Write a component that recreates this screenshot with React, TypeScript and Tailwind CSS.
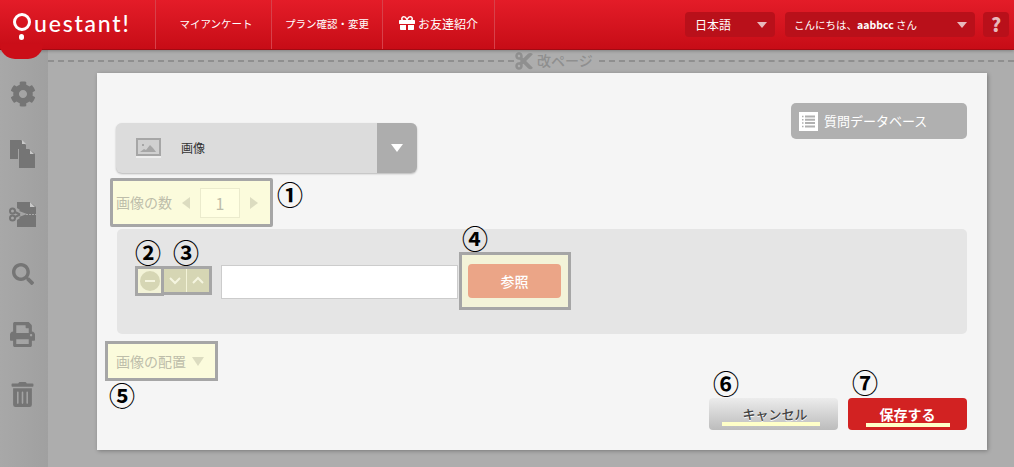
import { FaCog, FaCut, FaGift, FaPrint, FaSearch, FaTrashAlt } from 'react-icons/fa'

const FONT = "font-['Noto_Sans_CJK_JP','Liberation_Sans',sans-serif]"

function CopyIcon() {
  return (
    <svg width="25" height="28" viewBox="0 0 25 28" fill="currentColor">
      <path d="M0 0h11l5 5v4H8v10H0z" />
      <path d="M9 9h10l6 5v14H9z" />
      <path d="M12 0l4 4h-4zM20 10l4 4h-4z" fill="#c8c8c8" />
    </svg>
  )
}

function CutPageIcon() {
  return (
    <svg width="27" height="25" viewBox="0 0 27 25" fill="currentColor">
      <path d="M8 0h13l6 5v20H8v-7l3-2-1-1 8-3-8-3 1-1-3-2z" />
      <path d="M21 0l5 5h-5z" fill="#c8c8c8" />
      <circle cx="3.5" cy="9" r="2.5" fill="none" stroke="currentColor" strokeWidth="2" />
      <circle cx="3.5" cy="16" r="2.5" fill="none" stroke="currentColor" strokeWidth="2" />
      <path d="M6 10l5 2.5M6 15l5-2.5" stroke="currentColor" strokeWidth="2" />
      <path d="M17 12.5h10" stroke="#a8a8a8" strokeWidth="1" strokeDasharray="2 1" />
    </svg>
  )
}

function ListIcon() {
  return (
    <svg width="19" height="19" viewBox="0 0 19 19" className="mr-[6px]">
      <rect width="19" height="19" fill="#fff" />
      <path d="M6 4.5h10M6 7.8h10M6 11.1h10M6 14.4h10" stroke="#b0b0b0" strokeWidth="2" />
      <path d="M3 4.5h1.5M3 7.8h1.5M3 11.1h1.5M3 14.4h1.5" stroke="#b0b0b0" strokeWidth="1.5" />
    </svg>
  )
}

function Caret({ className }: { className: string }) {
  return <span className={`block w-0 h-0 border-x-[5px] border-x-transparent border-t-[6px] ${className}`} />
}

function NavItem({ label, className, icon }: { label: string; className: string; icon?: boolean }) {
  return (
    <div className={`h-[49px] flex items-center justify-center gap-[3px] border-r border-[#d8414a] text-white pb-[2px] ${className}`}>
      {icon && <FaGift className="w-[16px] h-[18px] mb-[1px]" />}
      <span>{label}</span>
    </div>
  )
}

function Num({ n, className }: { n: string; className: string }) {
  return (
    <span className={`absolute w-[26px] h-[26px] flex items-center justify-center text-[26px] leading-none font-bold text-black ${className}`}>
      {n}
    </span>
  )
}

export default function App() {
  const sideIcons = [
    <FaCog key="cog" size={26} />,
    <CopyIcon key="copy" />,
    <CutPageIcon key="cut" />,
    <FaSearch key="search" size={22} />,
    <FaPrint key="print" size={25} />,
    <FaTrashAlt key="trash" size={25} />,
  ]

  return (
    <div className={`${FONT} relative w-[1014px] h-[467px] overflow-hidden flex flex-col bg-[#adadad]`}>
      {/* Header */}
      <header className="h-[50px] shrink-0 flex items-start bg-gradient-to-b from-[#e41c28] to-[#c70c16] border-b border-[#a30a12] shadow-[0_1px_3px_rgba(0,0,0,0.25)] z-10">
        <div className="w-[156px] h-[49px] border-r border-[#d8414a] flex items-start pl-[13px] pt-[12px] text-white">
          <span className="relative shrink-0 w-[18px] h-[18px] mt-[1px] mr-[3px] rounded-full border-[3px] border-white">
            <span className="absolute left-[3px] top-[18px] w-[5px] h-[6px] rounded-full bg-white" />
          </span>
          <span className="font-['Lato',sans-serif] text-[23px] leading-[22px] tracking-[1.8px] font-medium">uestant!</span>
        </div>
        <NavItem label="マイアンケート" className="w-[116px] text-[10.5px] pl-[5px]" />
        <NavItem label="プラン確認・変更" className="w-[111px] text-[10.5px]" />
        <NavItem label="お友達紹介" className="w-[112px] text-[12px]" icon />
        <div className="flex-1 flex items-center justify-end gap-[10px] pt-[12px] pr-[5px] text-white">
          <div className="w-[90px] h-[25px] rounded-[4px] bg-[#b9101a] flex items-center justify-between pl-[10px] pr-[8px] text-[12px]">
            <span>日本語</span>
            <Caret className="border-t-[#e8b9bc]" />
          </div>
          <div className="w-[190px] h-[25px] rounded-[4px] bg-[#b9101a] flex items-center justify-between pl-[9px] pr-[8px] text-[10.5px] mr-[-2px]">
            <span>こんにちは、<b>aabbcc</b> さん</span>
            <Caret className="border-t-[#e8b9bc]" />
          </div>
          <div className="w-[26px] h-[25px] rounded-[4px] bg-[#b9101a] flex items-center justify-center text-[19px] font-black text-[#e8b9bc]">?</div>
        </div>
      </header>
      {/* Logo tab hanging under the header */}
      <div className="absolute left-0 top-[44px] w-[43px] h-[15px] rounded-b-[22px] bg-[#cb0e18] z-20" />

      <div className="flex-1 flex min-h-0">
        {/* Sidebar */}
        <aside className="w-[48px] shrink-0 bg-gradient-to-r from-[#a8a8a8] to-[#a0a0a0] flex flex-col pt-[14px] text-[#757575]">
          {sideIcons.map((icon, i) => (
            <div key={i} className="h-[60px] w-[45px] flex items-center justify-center">
              {icon}
            </div>
          ))}
        </aside>

        {/* Main */}
        <main className="flex-1 min-w-0">
          <div className="h-[23px] flex items-center pb-[2px]">
            <div className="w-[466px] border-t-2 border-dashed border-[#8f8f8f]" />
            <div className="flex items-center gap-[3px] text-[#8f8f8f] text-[14px]">
              <FaCut size={20} />
              <span className="font-medium">改ページ</span>
            </div>
            <div className="flex-1 ml-[6px] border-t-2 border-dashed border-[#8f8f8f]" />
          </div>

          {/* Card */}
          <div className="relative ml-[49px] w-[890px] h-[377px] bg-[#f5f5f5] shadow-[1px_1px_4px_rgba(0,0,0,0.3)] pt-[30px] pl-[19px] pr-[20px]">
            <div className="flex items-start justify-between">
              <div className="mt-[20px] w-[301px] h-[50px] rounded-[6px] bg-[#dcdcdc] shadow-[0_1px_2px_rgba(0,0,0,0.25)] flex overflow-hidden">
                <div className="flex-1 flex items-center pl-[20px] text-[12px] text-[#333]">
                  <svg width="25" height="20" viewBox="0 0 25 20" className="mr-[20px]">
                    <rect x="1" y="1" width="23" height="16" fill="#d0d0d0" stroke="#a6a6a6" strokeWidth="2" />
                    <path d="M4 14l4-3 2 1 4-5 3 3 3 4z" fill="#a6a6a6" />
                    <rect x="6" y="6" width="2" height="2" fill="#a6a6a6" />
                    <path d="M0 19h25" stroke="#fff" />
                  </svg>
                  <span>画像</span>
                </div>
                <div className="w-[40px] bg-[#adadad] flex items-center justify-center">
                  <span className="block w-0 h-0 border-x-[6px] border-x-transparent border-t-[8px] border-t-white" />
                </div>
              </div>
              <div className="w-[176px] h-[36px] rounded-[5px] bg-[#b0b0b0] flex items-center pl-[8px] text-white text-[13px]">
                <ListIcon />
                <span>質問データベース</span>
              </div>
            </div>

            {/* 画像の数 */}
            <div className="mt-[5px] ml-[-6px] w-[163px] h-[49px] border-[3px] border-[#a6a6a6] rounded-[2px] bg-[#fbfbdc] flex items-center text-[14px] text-[#bdbdaa] pl-[3px]">
              <span>画像の数</span>
              <span className="ml-[10px] w-0 h-0 border-y-[6px] border-y-transparent border-r-[8px] border-r-[#dcdcc0]" />
              <span className="ml-[10px] w-[40px] h-[30px] border border-[#ebebcd] bg-[#ffffe2] flex items-center justify-center text-[16px]">1</span>
              <span className="ml-[10px] w-0 h-0 border-y-[6px] border-y-transparent border-l-[8px] border-l-[#dcdcc0]" />
            </div>

            {/* 画像の行 */}
            <div className="mt-[2px] ml-[1px] h-[105px] rounded-[5px] bg-[#e5e5e5] flex items-start pt-[23px] pl-[18px]">
              <div className="mt-[14px] w-[29px] h-[30px] border-[3px] border-[#a6a6a6] bg-[#f3f3d8] flex items-center justify-center">
                <span className="w-[20px] h-[20px] shrink-0 rounded-full bg-[#d6d6b4] flex items-center justify-center">
                  <span className="w-[10px] h-[2px] bg-[#f5f5e0]" />
                </span>
              </div>
              <div className="mt-[14px] w-[48px] h-[29px] border-[3px] border-l-0 border-[#a6a6a6] bg-[#f3f3d8] flex gap-[1px]">
                <span className="flex-1 bg-[#d6d6b4] flex items-center justify-center">
                  <svg width="14" height="9" viewBox="0 0 14 9" fill="none" stroke="#f5f5e0" strokeWidth="2"><path d="M2 2l5 5 5-5" /></svg>
                </span>
                <span className="flex-1 bg-[#d6d6b4] flex items-center justify-center">
                  <svg width="14" height="9" viewBox="0 0 14 9" fill="none" stroke="#f5f5e0" strokeWidth="2"><path d="M2 7l5-5 5 5" /></svg>
                </span>
              </div>
              <div className="mt-[13px] ml-[9px] w-[237px] h-[34px] bg-white border border-[#cccccc]" />
              <div className="ml-[1px] w-[112px] h-[58px] border-[3px] border-[#a6a6a6] bg-[#f3f3d8] flex items-center justify-center">
                <span className="w-[93px] h-[34px] mr-[1px] rounded-[4px] bg-[#eba587] text-white text-[14px] font-medium flex items-center justify-center">参照</span>
              </div>
            </div>

            {/* 画像の配置 */}
            <div className="mt-[7px] ml-[-11px] w-[113px] h-[40px] border-[3px] border-[#a6a6a6] bg-[#fbfbdc] flex items-center pl-[8px] text-[14px] text-[#bdbdaa]">
              <span>画像の配置</span>
              <span className="ml-[6px] w-0 h-0 border-x-[6px] border-x-transparent border-t-[9px] border-t-[#dcdcc0]" />
            </div>

            {/* Buttons */}
            <div className="mt-[17px] flex justify-end gap-[10px]">
              <div className="relative w-[129px] h-[32px] rounded-[4px] bg-gradient-to-b from-[#ececec] to-[#bcbcbc] flex items-center justify-center text-[13px] font-medium text-[#444] [text-shadow:0_1px_0_#fff] pl-[3px]">
                キャンセル
                <span className="absolute left-[13px] top-[24px] w-[98px] h-[4px] bg-[#ffffc8]" />
              </div>
              <div className="relative w-[119px] h-[32px] rounded-[4px] bg-[#d22222] flex items-center justify-center text-[14px] font-bold text-white">
                保存する
                <span className="absolute left-[18px] top-[25px] w-[84px] h-[4px] bg-[#ffffc8]" />
              </div>
            </div>

            <Num n="①" className="left-[180px] top-[108px]" />
            <Num n="②" className="left-[38px] top-[166px]" />
            <Num n="③" className="left-[76px] top-[166px]" />
            <Num n="④" className="left-[365px] top-[152px]" />
            <Num n="⑤" className="left-[12px] top-[309px]" />
            <Num n="⑥" className="left-[616px] top-[297px]" />
            <Num n="⑦" className="left-[755px] top-[296px]" />
          </div>
        </main>
      </div>
    </div>
  )
}
